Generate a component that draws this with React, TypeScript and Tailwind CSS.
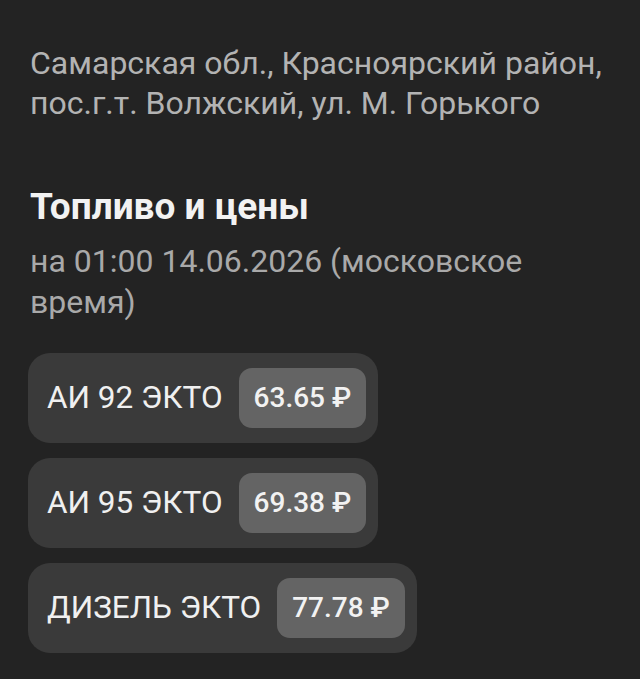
import React from "react";

const fuels = [
  { name: "АИ 92 ЭКТО", price: "63.65" },
  { name: "АИ 95 ЭКТО", price: "69.38" },
  { name: "ДИЗЕЛЬ ЭКТО", price: "77.78" },
];

export default function App() {
  return (
    <div
      className="w-[640px] h-[679px] bg-[#232323] pl-[30px] pr-[20px] pt-[43px] overflow-hidden"
      style={{ fontFamily: "Roboto, 'Noto Sans', sans-serif" }}
    >
      <div className="text-[32px] leading-[40px] text-[#b3b3b3] whitespace-nowrap">
        <div>Самарская обл., Красноярский район,</div>
        <div>пос.г.т. Волжский, ул. М. Горького</div>
      </div>
      <div className="mt-[62px] text-[37px] leading-[44px] font-bold text-[#f2f2f2] whitespace-nowrap">
        Топливо и цены
      </div>
      <div className="mt-[12px] text-[32px] leading-[41px] text-[#a9a9a9] whitespace-nowrap">
        <div>на 01:00 14.06.2026 (московское</div>
        <div>время)</div>
      </div>
      <div className="mt-[30px] -ml-[2px] flex flex-col items-start gap-[15px]">
        {fuels.map((f) => (
          <div
            key={f.name}
            className="flex items-center gap-[16px] h-[90px] rounded-[22px] bg-[#3a3a3a] pl-[19px] pr-[12px]"
          >
            <span className="text-[31.5px] text-[#f0f0f0] whitespace-nowrap">{f.name}</span>
            <span className="flex items-center h-[60px] rounded-[13px] bg-[#646464] px-[15px] text-[28px] font-medium text-[#f2f2f2] whitespace-nowrap">
              {f.price} ₽
            </span>
          </div>
        ))}
      </div>
    </div>
  );
}
